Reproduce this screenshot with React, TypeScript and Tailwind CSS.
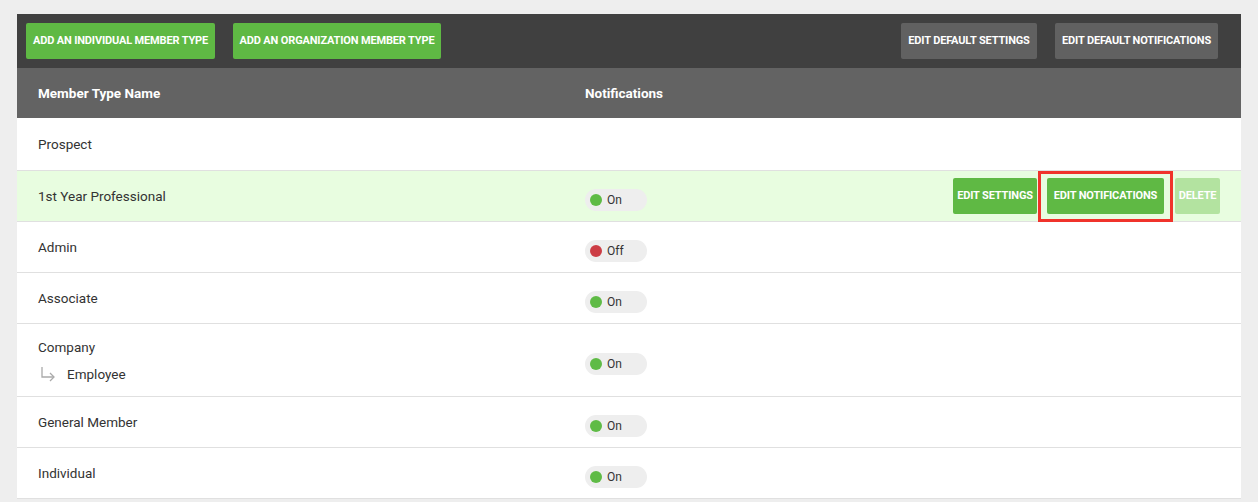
import React from "react";

type Row = {
  name: string;
  child?: string;
  status?: "on" | "off";
  active?: boolean;
};

const rows: Row[] = [
  { name: "Prospect" },
  { name: "1st Year Professional", status: "on", active: true },
  { name: "Admin", status: "off" },
  { name: "Associate", status: "on" },
  { name: "Company", child: "Employee", status: "on" },
  { name: "General Member", status: "on" },
  { name: "Individual", status: "on" },
];

function Toggle({ status }: { status: "on" | "off" }) {
  return (
    <div className="mt-[7px] flex h-[22px] w-[62px] items-center gap-[5px] rounded-full bg-[#eeeeee] pl-[5px]">
      <span
        className={
          status === "on"
            ? "h-[12px] w-[12px] rounded-full bg-[#5fbb46]"
            : "h-[12px] w-[12px] rounded-full bg-[#cc3d45]"
        }
      />
      <span className="text-[12px] text-[#333]">{status === "on" ? "On" : "Off"}</span>
    </div>
  );
}

const btn =
  "flex h-[36px] items-center justify-center rounded-[2px] text-[11px] font-bold uppercase tracking-[-0.15px] text-white whitespace-nowrap";

export default function App() {
  return (
    <div
      className="min-h-[502px] bg-[#eeeeee] px-[17px] pt-[14px]"
      style={{ fontFamily: "Roboto, 'Liberation Sans', sans-serif" }}
    >
      <div className="bg-white">
        {/* Toolbar */}
        <div className="flex h-[54px] items-center bg-[#404040] pl-[9px] pr-[23px]">
          <div className="flex gap-[18px]">
            <button className={btn + " w-[189px] bg-[#5fb944]"}>Add an individual member type</button>
            <button className={btn + " w-[208px] bg-[#5fb944]"}>Add an organization member type</button>
          </div>
          <div className="ml-auto flex gap-[18px]">
            <button className={btn + " w-[136px] bg-[#616161]"}>Edit default settings</button>
            <button className={btn + " w-[163px] bg-[#616161]"}>Edit default notifications</button>
          </div>
        </div>

        {/* Header */}
        <div className="flex h-[50px] items-center bg-[#636363] text-[13.5px] font-bold text-white">
          <div className="w-[568px] pl-[21px]">Member Type Name</div>
          <div>Notifications</div>
        </div>

        {/* Rows */}
        {rows.map((row, i) => (
          <div
            key={row.name}
            className={
              (row.active ? "bg-[#e8fde0] " : "bg-white ") +
              (i === 0 ? "h-[53px] " : row.child ? "h-[73px] " : "h-[51px] ") +
              "flex items-center border-b border-[#e0e0e0] pr-[21px] text-[13.5px] text-[#333]"
            }
          >
            <div className="w-[568px] pl-[21px] pt-[1px]">
              <div>{row.name}</div>
              {row.child && (
                <div className="mt-[6px] flex items-center">
                  <svg width="18" height="16" viewBox="0 0 18 16" className="ml-[2px] mr-[9px]" fill="none" stroke="#aaaaaa" strokeWidth="1.3">
                    <path d="M2 1v10h12" />
                    <path d="M10 7l4 4-4 4" />
                  </svg>
                  <span>{row.child}</span>
                </div>
              )}
            </div>
            <div>{row.status && <Toggle status={row.status} />}</div>
            {row.active && (
              <div className="ml-auto flex items-center">
                <button className={btn + " w-[84px] bg-[#5fb944]"}>Edit settings</button>
                <div className="relative ml-[10px]">
                  <button className={btn + " w-[117px] bg-[#5fb944]"}>Edit notifications</button>
                  <div className="pointer-events-none absolute -bottom-[8px] -left-[9px] -right-[9px] -top-[7px] border-[3px] border-[#f0332b]" />
                </div>
                <button className={btn + " ml-[11px] w-[45px] bg-[#b3e3a0]"}>Delete</button>
              </div>
            )}
          </div>
        ))}
      </div>
    </div>
  );
}
